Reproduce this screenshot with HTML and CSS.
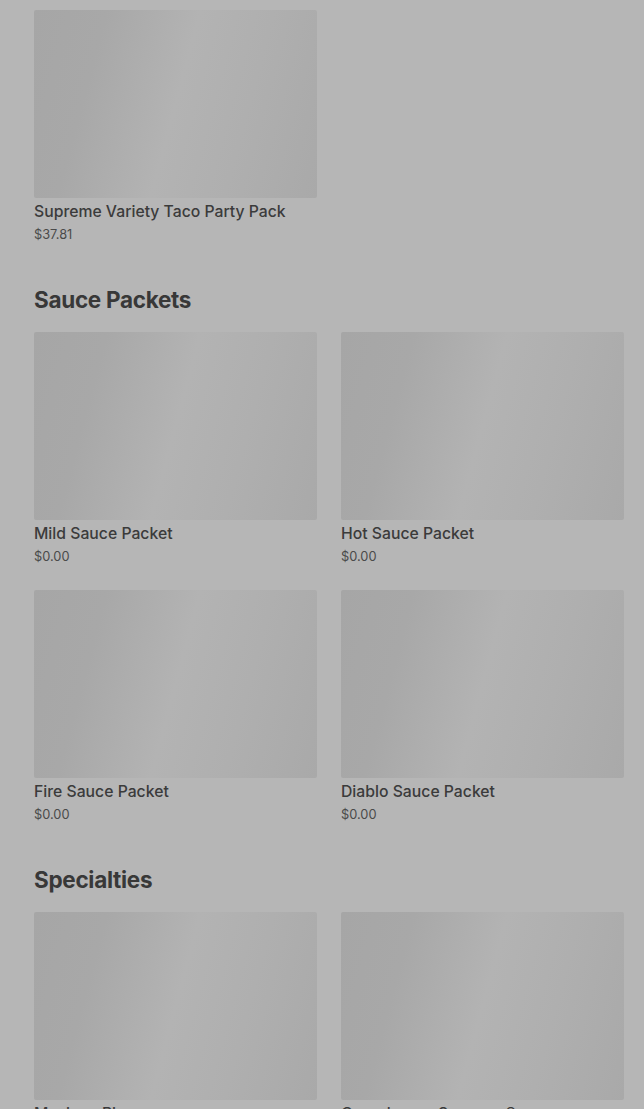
FILE: index.html
```html
<!DOCTYPE html>
<html lang="en">
<head>
<meta charset="utf-8">
<title>Menu</title>
<link rel="stylesheet" href="styles.css">
</head>
<body>
<main class="menu">
  <section class="section first">
    <div class="grid">
      <div class="card">
        <div class="thumb"></div>
        <div class="name">Supreme Variety Taco Party Pack</div>
        <div class="price">$37.81</div>
      </div>
    </div>
  </section>
  <section class="section">
    <h2 class="heading">Sauce Packets</h2>
    <div class="grid">
      <div class="card">
        <div class="thumb"></div>
        <div class="name">Mild Sauce Packet</div>
        <div class="price">$0.00</div>
      </div>
      <div class="card">
        <div class="thumb"></div>
        <div class="name">Hot Sauce Packet</div>
        <div class="price">$0.00</div>
      </div>
      <div class="card">
        <div class="thumb"></div>
        <div class="name">Fire Sauce Packet</div>
        <div class="price">$0.00</div>
      </div>
      <div class="card">
        <div class="thumb"></div>
        <div class="name">Diablo Sauce Packet</div>
        <div class="price">$0.00</div>
      </div>
    </div>
  </section>
  <section class="section">
    <h2 class="heading">Specialties</h2>
    <div class="grid">
      <div class="card">
        <div class="thumb"></div>
        <div class="name">Mexican Pizza</div>
        <div class="price">$5.49</div>
      </div>
      <div class="card">
        <div class="thumb"></div>
        <div class="name">Crunchwrap Supreme®</div>
        <div class="price">$5.49</div>
      </div>
    </div>
  </section>
</main>
</body>
</html>
```

FILE: styles.css
```css
html, body {
  margin: 0;
  padding: 0;
  background: #b6b6b6;
  height: 1109px;
  overflow: hidden;
}
body {
  font-family: Inter, "Liberation Sans", sans-serif;
  color: #333333;
}
.menu {
  padding: 10px 20px 0 34px;
}
.section {
  margin-bottom: 42px;
}
.heading {
  margin: 0 0 18px;
  font-size: 22.5px;
  line-height: 28px;
  font-weight: 700;
  letter-spacing: -0.3px;
  color: #383838;
}
.grid {
  display: grid;
  grid-template-columns: 283px 283px;
  column-gap: 24px;
  row-gap: 24px;
}
.thumb {
  height: 188px;
  border-radius: 2px;
  background: linear-gradient(105deg, #a6a6a6 0%, #a8a8a8 22%, #b3b3b3 50%, #afafaf 72%, #a9a9a9 100%);
}
.name {
  margin-top: 4px;
  font-size: 15.75px;
  line-height: 20px;
  font-weight: 500;
  color: #3b3b3b;
}
.price {
  margin-top: 3px;
  font-size: 12.8px;
  line-height: 19px;
  color: #4a4a4a;
}
```
